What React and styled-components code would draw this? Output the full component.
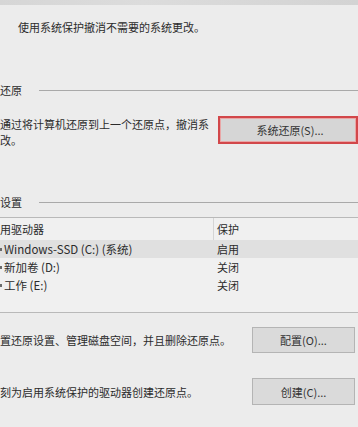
import React from 'react';
import styled, { createGlobalStyle } from 'styled-components';

const GlobalStyle = createGlobalStyle`
  html, body {
    margin: 0;
    padding: 0;
    background: #ececec;
    overflow: hidden;
  }
  body {
    font-family: "Noto Sans CJK SC", "Liberation Sans", sans-serif;
    font-size: 11px;
    color: #2b2b2b;
  }
`;

const Page = styled.div`
  width: 358px;
  height: 427px;
  overflow: hidden;
  display: flex;
  flex-direction: column;
`;

const TopBand = styled.div`
  height: 5px;
  background: linear-gradient(90deg, #d6d6d6 0%, #dcdcdc 40%, #d3d3d3 100%);
`;

const Intro = styled.p`
  margin: 14px 0 0 18px;
  line-height: 16px;
`;

// group box caption followed by an etched line
const GroupTitle = styled.div`
  display: flex;
  align-items: center;
  gap: 17px;
  margin-top: ${(p) => p.$top}px;
  line-height: 16px;

  &::after {
    content: '';
    flex: 1;
    height: 1px;
    background: #a9a9a9;
  }
`;

const ActionRow = styled.div`
  display: flex;
  align-items: ${(p) => (p.$top ? 'flex-start' : 'center')};
  justify-content: space-between;
  margin-top: ${(p) => p.$mt}px;
  padding-right: ${(p) => p.$pr || 0}px;
`;

const ActionText = styled.div`
  line-height: 16px;
  white-space: nowrap;
`;

const Button = styled.div`
  box-sizing: border-box;
  width: ${(p) => p.$w}px;
  height: ${(p) => p.$h}px;
  flex-shrink: 0;
  display: flex;
  align-items: center;
  justify-content: center;
  background: #dadada;
  border: 1px solid #b4b4b4;
  color: #333;
  font-size: 11px;
  padding-left: ${(p) => p.$pl || 0}px;

  ${(p) =>
    p.$marked &&
    `
    border: 2px solid #d2474a;
    box-shadow: inset 0 0 0 1px #e9a6a6;
    background: #d6d6d6;
  `}
`;

const Table = styled.div`
  box-sizing: border-box;
  margin-top: 7px;
  height: 96px;
  border-top: 1px solid #b9b9b9;
  border-bottom: 1px solid #b9b9b9;
  background: #f0f0f0;
`;

const TableRow = styled.div`
  display: grid;
  grid-template-columns: 213px 1fr;
  height: ${(p) => (p.$head ? 22 : 18)}px;
  align-items: center;
  background: ${(p) => (p.$selected ? '#e0e0e0' : 'transparent')};
`;

const Cell = styled.div`
  display: flex;
  align-items: center;
  height: 100%;
  white-space: nowrap;
  font-size: ${(p) => (p.$big ? 11.5 : 11)}px;
  padding-left: ${(p) => p.$pl || 0}px;
  border-left: ${(p) => (p.$divider ? '1px solid #d4d4d4' : 'none')};
`;

const DriveStub = styled.span`
  width: 2px;
  height: 3px;
  margin-right: 2px;
  background: #6b6b6b;
`;

const drives = [
  { name: 'Windows-SSD (C:) (系统)', state: '启用', selected: true },
  { name: '新加卷 (D:)', state: '关闭' },
  { name: '工作 (E:)', state: '关闭' },
];

export default function App() {
  return (
    <Page>
      <GlobalStyle />
      <TopBand />
      <Intro>使用系统保护撤消不需要的系统更改。</Intro>

      <GroupTitle $top={47}>还原</GroupTitle>
      <ActionRow $top $mt={18}>
        <ActionText>
          通过将计算机还原到上一个还原点，撤消系
          <br />
          改。
        </ActionText>
        <Button $marked $w={140} $h={28} $pl={4}>
          系统还原(S)...
        </Button>
      </ActionRow>

      <GroupTitle $top={46}>设置</GroupTitle>
      <Table>
        <TableRow $head>
          <Cell>用驱动器</Cell>
          <Cell $divider $pl={3}>保护</Cell>
        </TableRow>
        {drives.map((d) => (
          <TableRow key={d.name} $selected={d.selected}>
            <Cell $big>
              <DriveStub />
              {d.name}
            </Cell>
            <Cell $pl={4}>{d.state}</Cell>
          </TableRow>
        ))}
      </Table>

      <ActionRow $mt={14} $pr={3}>
        <ActionText>置还原设置、管理磁盘空间，并且删除还原点。</ActionText>
        <Button $w={103} $h={26}>配置(O)...</Button>
      </ActionRow>

      <ActionRow $mt={25} $pr={3}>
        <ActionText>刻为启用系统保护的驱动器创建还原点。</ActionText>
        <Button $w={103} $h={27}>创建(C)...</Button>
      </ActionRow>
    </Page>
  );
}
